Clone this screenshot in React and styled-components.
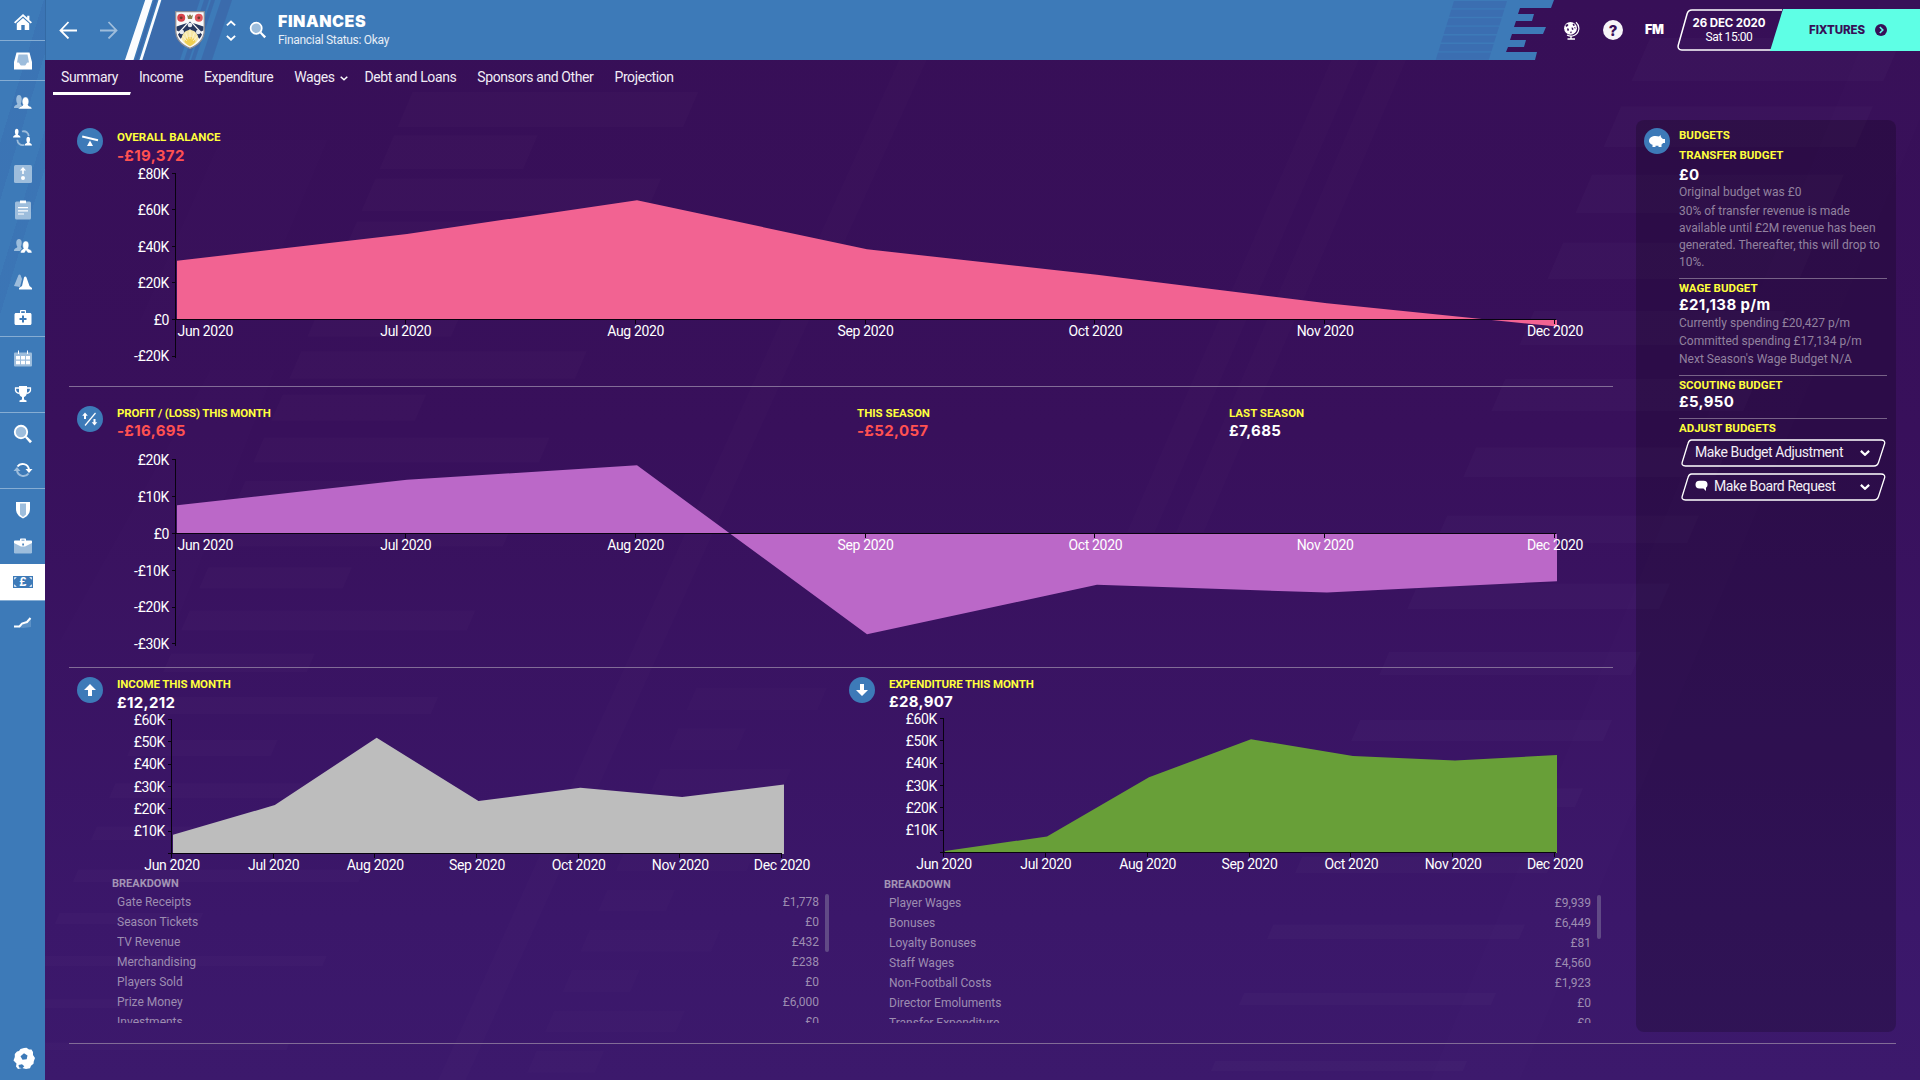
import React from "react";
import styled, { createGlobalStyle, css } from "styled-components";

const SANS = `Roboto, "Liberation Sans", sans-serif`;
const WIDE = `Inter, "Liberation Sans", sans-serif`;
const BLUE = "#3d7ab8";

const GlobalStyle = createGlobalStyle`
  * { box-sizing: border-box; }
  html, body { margin: 0; padding: 0; background: #370f57; }
  body { font-family: ${SANS}; color: #fff; overflow: hidden; }
`;

/* ---------- layout ---------- */
const Shell = styled.div`
  position: relative;
  display: grid;
  grid-template-columns: 45px 1fr;
  width: 1920px;
  height: 1080px;
  background: linear-gradient(180deg, #370f57 0%, #38105b 40%, #3b176a 85%, #3c196c 100%);
  overflow: hidden;
`;
const Backdrop = styled.svg`
  position: absolute;
  inset: 0;
  width: 1920px;
  height: 1080px;
`;
const Sidebar = styled.nav`
  position: relative;
  display: flex;
  flex-direction: column;
  height: 1080px;
  background: ${BLUE};
  background-image: linear-gradient(107deg, transparent 0 30%, rgba(50, 90, 165, 0.18) 30% 42%, transparent 42% 58%, rgba(50, 90, 165, 0.16) 58% 66%, transparent 66%);
  background-size: 45px 330px;
  background-repeat: no-repeat;
`;
const NavGroup = styled.div`
  display: flex;
  flex-direction: column;
  padding-top: ${(p) => (p.$lone ? 0 : 3)}px;
  border-bottom: ${(p) => (p.$open ? "none" : "1px solid #86add3")};
`;
const NavItem = styled.div`
  display: flex;
  align-items: center;
  justify-content: center;
  height: ${(p) => p.$h || 36}px;
  padding: ${(p) => p.$pt || 0}px 0 0 1px;
  background: ${(p) => (p.$active ? "#fff" : "transparent")};
`;
const NavFoot = styled.div`
  display: flex;
  justify-content: center;
  margin-top: auto;
  padding: 0 0 11px 2px;
`;
const Page = styled.div`
  position: relative;
  display: flex;
  flex-direction: column;
  min-width: 0;
`;

/* ---------- header ---------- */
const Header = styled.header`
  position: relative;
  display: flex;
  align-items: center;
  height: 60px;
`;
const HeaderArt = styled.svg`
  position: absolute;
  left: 0;
  top: 0;
  width: 1540px;
  height: 60px;
`;
const HeaderLeft = styled.div`
  position: relative;
  display: flex;
  align-items: center;
  height: 60px;
  padding-left: 14px;
`;
const HeaderRight = styled.div`
  position: relative;
  display: flex;
  align-items: center;
  height: 60px;
  margin-left: auto;
`;
const Slot = styled.div`
  display: flex;
  align-items: center;
  flex: none;
  margin-left: ${(p) => p.$ml || 0}px;
  opacity: ${(p) => p.$o || 1};
`;
const Stepper = styled.div`
  display: flex;
  flex-direction: column;
  gap: 8px;
  padding-top: 1px;
`;
const TitleBlock = styled.div`
  display: flex;
  flex-direction: column;
  gap: 1px;
  margin-left: 11px;
`;
const Title = styled.h1`
  margin: 0;
  font: 900 16px/19px ${WIDE};
  letter-spacing: 0.55px;
`;
const Subtitle = styled.div`
  font: 400 12px/16px ${SANS};
  letter-spacing: -0.3px;
  color: #e6edf6;
`;
const Brand = styled.div`
  margin-left: 22px;
  width: 22px;
  font: 900 12.5px/20px ${WIDE};
  letter-spacing: -0.4px;
`;
const DateBox = styled.div`
  position: relative;
  width: 106px;
  height: 42px;
  margin-left: 10px;
  padding-right: 2px;
  display: flex;
  flex-direction: column;
  align-items: center;
  justify-content: center;
`;
const BoxArt = styled.svg`
  position: absolute;
  left: 0;
  top: 0;
`;
const DateMain = styled.div`
  position: relative;
  font: 700 11.5px/14px ${WIDE};
  letter-spacing: -0.1px;
  white-space: nowrap;
`;
const DateSub = styled.div`
  position: relative;
  font: 400 12px/14px ${SANS};
  letter-spacing: -0.4px;
`;
const Continue = styled.button`
  display: flex;
  align-items: center;
  gap: 10px;
  width: 150px;
  height: 42px;
  margin-left: -13px;
  padding: 0 0 0 39px;
  border: 0;
  background: #5effe5;
  color: #370f57;
  clip-path: polygon(13px 0, 100% 0, 100% 100%, 0 100%);
  font: 800 11.5px/14px ${WIDE};
  letter-spacing: -0.1px;
`;

/* ---------- tabs ---------- */
const Tabs = styled.div`
  display: flex;
  height: 36px;
  padding-left: 8px;
`;
const Tab = styled.div`
  display: flex;
  align-items: center;
  gap: 5px;
  height: 35px;
  padding: 0 ${(p) => (p.$menu ? 9 : 13)}px 1px 8px;
  font: 400 14px/18px ${SANS};
  letter-spacing: -0.4px;
  white-space: nowrap;
  color: #f1ecf6;
  ${(p) =>
    p.$active &&
    css`
      background: linear-gradient(#fff, #fff) bottom / 100% 3px no-repeat;
      clip-path: polygon(0 0, 100% 0, 100% 32px, calc(100% - 1px) 100%, 0 100%);
    `}
`;

/* ---------- body ---------- */
const Body = styled.div`
  display: flex;
  height: 947px;
  padding-left: 24px;
  margin-right: 24px;
`;
const Charts = styled.div`
  display: flex;
  flex-direction: column;
  width: 1544px;
`;
const Section = styled.section`
  display: flex;
  flex-direction: column;
  height: ${(p) => p.$h}px;
  padding-top: ${(p) => p.$pt}px;
  border-bottom: ${(p) => (p.$last ? "none" : "1px solid #826c97")};
`;
const Halves = styled.div`
  display: grid;
  grid-template-columns: 772px 772px;
  height: 375px;
`;
const FootRule = styled.div`
  height: 1px;
  margin: 0 24px;
  background: #826c97;
`;
const SectionHead = styled.div`
  display: flex;
  align-items: flex-start;
  padding-left: 8px;
`;
const Badge = styled.div`
  display: flex;
  align-items: center;
  justify-content: center;
  flex: none;
  width: 26px;
  height: 26px;
  margin-top: ${(p) => p.$mt || 0}px;
  margin-right: ${(p) => p.$mr || 14}px;
  border-radius: 50%;
  background: ${BLUE};
`;
const Stat = styled.div`
  display: flex;
  flex-direction: column;
  gap: ${(p) => p.$gap || 0}px;
  width: ${(p) => (p.$w ? p.$w + "px" : "auto")};
`;
const Caption = styled.div`
  font: 700 11.500px/${(p) => p.$lh || 18}px ${SANS};
  letter-spacing: ${(p) => p.$ls || 0}px;
  color: #ffff3c;
  white-space: nowrap;
`;
const Amount = styled.div`
  font: 700 15px/${(p) => p.$lh || 18}px ${WIDE};
  letter-spacing: 0.35px;
  color: ${(p) => (p.$neg ? "#ff5151" : "#fff")};
  margin-top: ${(p) => p.$mt || 0}px;
  white-space: nowrap;
`;
const ChartSvg = styled.svg`
  display: block;
  flex: none;
  overflow: visible;
  font: 400 14px ${SANS};
  letter-spacing: -0.33px;
  fill: #fff;
`;
const BreakTitle = styled.div`
  padding-left: 43px;
  font: 700 11px/17px ${SANS};
  color: #a394b5;
`;
const BreakWrap = styled.div`
  display: flex;
  gap: 6px;
  height: ${(p) => p.$h}px;
  padding: 0 12px 0 48px;
`;
const BreakList = styled.div`
  flex: 1;
  overflow: hidden;
`;
const BreakRow = styled.div`
  display: flex;
  justify-content: space-between;
  font: 400 12px/20px ${SANS};
  color: #9d8db1;
`;
const Scroll = styled.div`
  width: 4px;
  height: ${(p) => p.$h}px;
  margin-top: 2px;
  border-radius: 2px;
  background: #614a86;
`;

/* ---------- budgets ---------- */
const Panel = styled.aside`
  display: flex;
  align-items: flex-start;
  width: 260px;
  height: 912px;
  margin: 24px 0 0 23px;
  padding: 8px 9px 0 8px;
  border-radius: 8px;
  background: rgba(0, 0, 0, 0.2);
`;
const PanelBody = styled.div`
  flex: 1;
  display: flex;
  flex-direction: column;
  margin-top: -2px;
`;
const Note = styled.div`
  font: 400 12px/${(p) => p.$lh || 18}px ${SANS};
  color: #92829f;
  margin-top: ${(p) => p.$mt || 0}px;
`;
const Rule = styled.div`
  height: 1px;
  margin: ${(p) => p.$mt || 7}px 0 1px;
  background: #776287;
`;
const Picker = styled.button`
  position: relative;
  display: flex;
  align-items: center;
  gap: 6px;
  width: 205px;
  height: 28px;
  margin: ${(p) => p.$mt || 0}px 0 0 2px;
  padding: 0 16px 3px 14px;
  border: 0;
  background: none;
  color: #f3eff6;
  font: 400 14px/18px ${SANS};
  letter-spacing: -0.42px;
`;
const PickerText = styled.span`
  position: relative;
  flex: 1;
  text-align: left;
  white-space: nowrap;
`;
const Caret = styled.span`
  display: flex;
  padding-top: ${(p) => p.$drop || 3}px;
`;

/* ---------- icons ---------- */
const W = "#fff";
const L = "#9dbddc";
const Ico = ({ s = 20, children }) => (
  <svg width={s} height={s} viewBox="0 0 20 20" fill={W}>
    {children}
  </svg>
);
const person = "M0 14.5c0-2.4 3.2-2.6 3.6-3.8C2.2 9 1.8 3 5 3s2.800 6 1.400 7.700c.4 1.200 3.600 1.400 3.600 3.800z";
const HomeIcon = () => (
  <Ico>
    <path d="M10 2 1 10.300l1.300 1.200L10 4.500l7.700 7 1.300-1.200-2.600-2.400V3.800h-2.200v2z" />
    <path d="M10 6 3.800 11.600V18h4.500v-5h3.400v5h4.500v-6.400z" />
  </Ico>
);
const InboxIcon = () => (
  <Ico>
    <path fill={L} d="M5 3h10l2 9-4 4H7l-4-3z" />
    <path d="M3.500 1.500h13L19 11v7.500H1V11zM5.500 3.500 4 11.500h1.500c1 0 1.500 3 2.500 3h4c1 0 1.500-3 2.500-3H16l-1.500-8z" fillRule="evenodd" />
  </Ico>
);
const PeopleIcon = () => (
  <Ico>
    <path fill={L} d="M1 16c0-3 3-2.800 3.400-4.300C2.800 9.500 2.600 3 6 3s3.200 6.500 1.800 8.700c.2 1 1.200 1.300 1.200 1.300L8 16z" />
    <path d="M5.500 17c0-2.800 4-2.600 4.600-4C8.500 11 8.700 5 12.500 5s4 6 2.400 8c.6 1.400 4.100 1.200 4.100 4z" stroke={BLUE} strokeWidth=".5" />
  </Ico>
);
const SwapPeopleIcon = () => (
  <Ico>
    <path fill="none" stroke={L} strokeWidth="1.800" d="M9 3.500c4-1 6.500 1.500 6.700 4.500M11 16.800c-3.500 1-6.500-1.500-6.700-5" />
    <g transform="translate(0 -1.500) scale(.75)"><path d={person} /></g>
    <g transform="translate(11.500 6.500) scale(.75)"><path d={person} /></g>
  </Ico>
);
const TacticIcon = () => (
  <Ico>
    <rect x="1" y="1" width="18" height="18" rx="1.500" fill={L} />
    <circle cx="10" cy="14" r="2" />
    <path d="M10 3 7 6.500h2.200V10h1.600V6.500H13z" />
  </Ico>
);
const ClipIcon = () => (
  <Ico>
    <rect x="2" y="1.500" width="16" height="18" rx="1.500" fill={L} />
    <path d="M7 .5h6v2.800H7zM5 7h10v1.200H5zM5 10.200h10v1.200H5zM5 13.400h6v1.200H5z" />
  </Ico>
);
const StaffIcon = () => (
  <Ico>
    <path fill={L} d="M1 15c0-3 3-2.800 3.400-4.300C2.800 8.500 2.600 3 6 3s3.200 5.500 1.800 7.700c.2 1 1.200 1.300 1.200 1.300L7 15z" />
    <path d="M7.500 17c0-3.500 2.500-3.600 3-4.500C9 10 9.400 5 12.800 5s3.800 5 2.200 7.500c1 .9 4 1 4 4.500h-4l-2-2.500-1.500 2.500z" stroke={BLUE} strokeWidth=".5" />
  </Ico>
);
const ConesIcon = () => (
  <Ico>
    <path fill={L} d="M1 14 5.500 3c.3-.8 1.700-.8 2 0L9 7 7 15z" />
    <path d="m6 16 3-2L11 5.500c.5-1.200 2-1.200 2.500 0L16.500 14l2.500 2v1.500H6z" />
  </Ico>
);
const MedIcon = () => (
  <Ico>
    <path d="M7 5V3.200C7 2.500 7.400 2 8 2h4c.6 0 1 .5 1 1.200V5h4c.8 0 1.500.7 1.500 1.500v9c0 .8-.7 1.500-1.500 1.500H3c-.8 0-1.500-.7-1.500-1.500v-9C1.500 5.700 2.200 5 3 5zm1.200 0h3.600V3.300H8.200zM9 7.500V10H6.500v2H9v2.500h2V12h2.500v-2H11V7.500z" fillRule="evenodd" />
  </Ico>
);
const CalIcon = () => (
  <Ico>
    <rect x="1" y="4.500" width="18" height="14" rx="1" fill={L} />
    <path d="M5 2.500h1V6H5zM14 2.500h1V6h-1zM3 8h4v3.500H3zM8 8h4v3.500H8zM13 8h4v3.500h-4zM3 12.800h4v3.500H3zM8 12.800h4v3.500H8zM13 12.800h4v3.500h-4z" />
  </Ico>
);
const CupIcon = () => (
  <Ico>
    <path d="M6 2h8v6c0 3-1.500 4.500-3 5v2.500l2.500 1V18h-7v-1.500l2.500-1V13c-1.500-.5-3-2-3-5z" />
    <path fill="none" stroke={W} strokeWidth="1.300" d="M6 4H2.500C2 7.500 4 9.500 6.500 9.200M14 4h3.500c.5 3.500-1.500 5.500-4 5.200" />
  </Ico>
);
const SearchIcon = ({ s }) => (
  <Ico s={s}>
    <circle cx="8" cy="8" r="6.200" fill={L} stroke={W} strokeWidth="1.900" />
    <path d="m12 13.500 1.500-1.500 5.500 5.200-2 2z" />
  </Ico>
);
const CycleIcon = () => (
  <Ico>
    <path fill="none" stroke={W} strokeWidth="2" d="M4.500 6.500C7.500 2.200 15 3.500 16 9.500" />
    <path d="M12.500 9h7L16 13z" />
    <path fill="none" stroke={L} strokeWidth="2" d="M15.500 13.500C12.500 17.800 5 16.500 4 10.500" />
    <path fill={L} d="M.5 11h7L4 7z" />
  </Ico>
);
const ShieldIcon = () => (
  <Ico>
    <path d="M3 2h14v7c0 5-3.500 8-7 9.500C6.500 17 3 14 3 9z" />
    <path fill={L} d="M7 3.500h6v11L10 17l-3-2.500z" />
  </Ico>
);
const CaseIcon = () => (
  <Ico>
    <rect x="1" y="5" width="18" height="12.500" rx="1.200" fill={L} />
    <path d="M7 4.500V3.500c0-.6.400-1 1-1h4c.6 0 1 .4 1 1v1h5c.6 0 1 .5 1 1V7l-7 3.500h-4L1 7V5.500c0-.5.400-1 1-1zm1.500 0h3V3.800h-3z" fillRule="evenodd" />
    <rect x="9.300" y="7.500" width="1.600" height="2" fill={BLUE} />
  </Ico>
);
const MoneyText = styled.text`
  font: 700 11.500px ${WIDE};
`;
const MoneyIcon = () => (
  <svg width="20" height="12" viewBox="0 0 20 12">
    <rect width="20" height="12" fill={BLUE} />
    <path fill={W} d="M1.200 1.200h2.600L1.200 3.800zM18.800 1.200h-2.600l2.600 2.600zM1.200 10.800h2.600L1.200 8.200zM18.800 10.800h-2.600l2.600-2.600z" />
    <MoneyText x="10" y="10.200" textAnchor="middle" fill={W}>£</MoneyText>
  </svg>
);
const TrendIcon = () => (
  <Ico>
    <path fill="#5c91c6" d="M1 14.500h6L10 12l4-1 4-4v8l-8 1z" />
    <path fill="none" stroke={W} strokeWidth="2" d="M1 14.500h5.500L9 11.500l5-1.500L17.500 6" />
  </Ico>
);
const BallIcon = () => (
  <svg width="22" height="22" viewBox="0 0 22 22">
    <path fill={W} d="M7.500 2 11 1l2.500-.2L16 2.500h2.500L20 5v3l2 3-1.200 3.200-.3 2.500-2.500 2-1 2.500-4 .8L9 21l-4 1-2-2.500.5-3L.5 13.500 1.800 10l0-3L4 4.500 6 4z" />
    <path fill={BLUE} d="m11 6.300 3.500 2.200-.8 3.800-4.200.5-2-3.600zM5.500 18l3.500-.8 2.300 2-2 2-3.300-.7z" />
  </svg>
);
const Chevron = ({ w = 8, up, sw = 1.800 }) => (
  <svg width={w} height={w * 0.625} viewBox="0 0 8 5" fill="none" stroke={W} strokeWidth={sw}>
    <path d={up ? "M.7 4.300 4 1.200l3.300 3.100" : "M.7.7 4 3.800 7.300.7"} />
  </svg>
);
const Arrow = ({ flip }) => (
  <svg width="18" height="18" viewBox="0 0 18 18" fill="none" stroke={W} strokeWidth="1.800">
    <path d={flip ? "M0 9.500h16.500M8.500 1l8 8.500-8 8" : "M18 9.500H1.500M9.500 1l-8 8.500 8 8"} />
  </svg>
);
const Crest = () => (
  <svg width="30" height="38" viewBox="0 0 30 38">
    <path d="M.7.7h28.600V19c0 9-6 15-14.300 18.300C6.700 34 .7 28 .7 19z" fill="#fafafa" stroke="#8d8d94" strokeWidth="1.300" />
    <path d="M15 10.500 27 23.500c-.6 1.600-1.500 3-2.600 4.200L15 18l-9.400 9.700C4.500 26.500 3.600 25.100 3 23.500z" fill="#27385f" />
    <path d="M1.500 15.500 12 12l-8 8.500-2.300-1zM28.500 15.500 18 12l8 8.500 2.300-1z" fill="#27385f" />
    <path d="M15 19c5 0 8 4 8.500 9-2 3.500-5 5.800-8.500 7.500-3.500-1.700-6.500-4-8.500-7.500C7 23 10 19 15 19z" fill="#f6e7a6" />
    <path d="M15 26c3 0 5 2 5.500 5-1.600 1.800-3.500 3.200-5.500 4.300-2-1.100-3.900-2.500-5.500-4.300.5-3 2.500-5 5.500-5z" fill="#f0cf52" />
    <path d="M15 20v8M10.500 21.500l2.500 7M19.500 21.500l-2.500 7M7.800 25l4 5M22.200 25l-4 5" stroke="#fffbe6" strokeWidth=".7" />
    <circle cx="6.200" cy="6.800" r="4" fill="#d8434b" />
    <circle cx="23.800" cy="6.800" r="4" fill="#e0565c" />
    <circle cx="6.200" cy="6.800" r="1.400" fill="#6d3a2c" />
    <circle cx="23.800" cy="6.800" r="1.400" fill="#6d3a2c" />
    <path d="M12 3.500 13.500 5 15 3.300 16.500 5 18 3.500 17 8h-4z" fill="#8d7f4d" />
    <circle cx="15" cy="14" r="2.300" fill="#e6e9ef" />
    <circle cx="6.800" cy="21" r="2.300" fill="#e6e9ef" />
    <circle cx="23.200" cy="21" r="2.300" fill="#e6e9ef" />
  </svg>
);
const GlobeIcon = () => (
  <svg width="17" height="19" viewBox="0 0 17 19">
    <circle cx="7.500" cy="7.300" r="6.400" fill={W} />
    <path d="M13 1.200c4.500 4 3.600 11-2 13.300-2.500 1-5 .6-7-.5" fill="none" stroke={W} strokeWidth="1.200" />
    <path d="M8 15v2.500M4.500 18h7.500" stroke={W} strokeWidth="1.400" />
    <path d="M2.500 4 4.500 3l1 1-1 1.200L3 6zM9.500 3.200l1.500-.8.8 2-1.300.6zM4.500 7l1.500 1-.5 2-1.500-.8zM8.500 6.500l1.500.3.500 1.700-1.500.5zM11 6.500l1.300-.4v2zM7.500 10.500l1.500.3-.8 1.500-1-.3z" fill="#370f57" />
  </svg>
);
const HelpText = styled.text`
  font: 800 15px ${WIDE};
`;
const HelpIcon = () => (
  <svg width="20" height="20" viewBox="0 0 20 20">
    <circle cx="10" cy="10" r="10" fill="#f6f4f8" />
    <HelpText x="10" y="15.500" textAnchor="middle" fill="#370f57">?</HelpText>
  </svg>
);
const GoIcon = () => (
  <svg width="12" height="12" viewBox="0 0 12 12">
    <circle cx="6" cy="6" r="6" fill="#370f57" />
    <path d="M4.800 3 7.800 6l-3 3" fill="none" stroke="#5effe5" strokeWidth="1.600" />
  </svg>
);
const BalanceIcon = () => (
  <svg width="18" height="16" viewBox="0 0 18 16">
    <path d="M1.200 3.500 17 7.200" stroke={W} strokeWidth="2" />
    <path d="M9 7.500 12 13H6z" fill={W} />
  </svg>
);
const RatioIcon = () => (
  <svg width="18" height="18" viewBox="0 0 18 18">
    <path d="M4 15.500 14.500 3" stroke={W} strokeWidth="1.200" />
    <path fill={W} d="M4 2.500 1.200 5.700H3V9h2V5.700h1.800zM13.500 15.500l2.800-3.200h-1.800V9h-2v3.300h-1.800z" />
  </svg>
);
const BigArrow = ({ down }) => (
  <svg width="12" height="14" viewBox="0 0 12 14">
    <path fill={W} d={down ? "M6 13 0 7h4V1h4v6h4z" : "M6 1 0 7h4v6h4V7h4z"} />
  </svg>
);
const PiggyIcon = () => (
  <svg width="18" height="14" viewBox="0 0 18 14">
    <path fill={W} d="M1 7c0-3.500 3-5 6.500-5 1.500 0 2.500.2 3.500.6L12.500 1l.5 2.300c1 .6 1.500 1.200 1.800 1.700H17v4h-2c-.4.700-1 1.200-1.500 1.600V13H10.500v-1.300H7.500V13H4.500v-2.200C2.500 10 1 9 1 7z" />
  </svg>
);
const BubbleIcon = () => (
  <svg width="13" height="11" viewBox="0 0 13 11">
    <path fill={W} d="M4.500.8h4C11.500.8 12.500 2.500 12.500 4.500c0 1.500-.5 2.500-1.500 3.200V11L8.500 8.500h-4C1.800 8.500.5 7 .5 4.700S1.800.8 4.500.8z" />
  </svg>
);

/* ---------- decorative artwork ---------- */
const slab = (x, y, w, h, k = 0.43) => `M${x} ${y}h${w}l${-k * h} ${h}h${-w}z`;
const BackdropArt = () => {
  const left = Array.from({ length: 23 }, (_, i) => {
    const y = 92 + 43.2 * i;
    return slab(452 - 0.43 * y, y, i % 2 ? 144 : 286, 35 - 1.25 * i);
  });
  const right = Array.from({ length: 16 }, (_, i) => {
    const y = 38 + 68.2 * i;
    return slab(1650 - 0.425 * (y - 38), y, 252, 43 - 2.2 * i);
  });
  const mid = Array.from({ length: 10 }, (_, i) => {
    const y = 688 + 40.3 * i;
    return slab(696 - 0.44 * (y - 688), y, i % 2 ? 68 : 131, 22);
  });
  return (
    <Backdrop fill="#fff" fillOpacity="0.012">
      <path d={left.join("")} fillOpacity="0.016" />
      <path d={right.join("")} fillOpacity="0.020" />
      <path d={mid.join("")} />
      <path d="M926 0h28L466 1080h-28z" />
      <path d="M1357 0h28L1155 532h-28zM1404 0h28L1204 532h-28z" />
      <path d="M220 140h108L252 320H140zM210 370h65L170 640H60zM1880 0h40v120L1520 1080h-90z" fillOpacity="0.008" />
    </Backdrop>
  );
};
const HeaderBackdrop = () => (
  <HeaderArt viewBox="45 0 1540 60">
    <path fill={BLUE} d="M45 0H1554L1551 8H1520L1518 14H1534L1532 21H1516L1514 27H1546L1543 34H1512L1510 40H1526L1524 47H1508L1506 52H1537L1535 60H45z" />
    {[0, 8.6, 17.2, 25.8, 34.4, 43, 51.6].map((y) => (
      <path key={y} fill="#3b6eb1" d={slab(1454 - 0.31 * y, y + 1, 53, 7.2, 0.31)} />
    ))}
    <path fill="#3b69ab" d="M162 0h38l-20 60h-38zM204 0h5l-20 60h-5zM211 0h4l-20 60h-4zM221 0h11l-20 60h-11zM154 0h3l-19 60h-3z" fillOpacity="0.900" />
    <path fill="#fbfcfe" d="M145.200 0h7.300l-19 60h-8.500zM158.500 0h2.800l-19 60h-2.800z" />
    <path fill="#2d5f97" fillOpacity="0.600" d="M45 0h1v60h-1z" />
  </HeaderArt>
);

/* ---------- charts ---------- */
const MONTHS = ["Jun 2020", "Jul 2020", "Aug 2020", "Sep 2020", "Oct 2020", "Nov 2020", "Dec 2020"];
const Chart = ({ width, height, axisX, zero, perK, step, color, values, ticks, endLabelInset, topless }) => {
  const base = zero + 0.5;
  const x0 = axisX + 1.5;
  const pts = values.map((v, i) => `${x0 + i * step},${base - v * perK}`).join(" ");
  const tickStep = (step * 6 - 1) / 6;
  const top = zero - ticks[0] * perK;
  const bottom = zero - Math.min(0, ticks[ticks.length - 1]) * perK;
  return (
    <ChartSvg width={width} height={height}>
      <polygon points={`${x0},${base} ${pts} ${x0 + 6 * step},${base}`} fill={color} />
      <g fill="none" stroke="#08020f" strokeWidth="1" shapeRendering="crispEdges">
        <path d={`M${axisX} ${top}V${bottom + (topless ? 0 : 2)}M${axisX} ${zero}H${axisX + tickStep * 6 + 1}`} />
        {ticks.map((t) => <path key={t} d={`M${axisX - 3.5} ${zero - t * perK}H${axisX}`} />)}
        {topless && <path d={`M${axisX - 3.5} ${zero}H${axisX}`} />}
        {MONTHS.map((m, i) => <path key={m} d={`M${Math.floor(axisX + i * tickStep) + 0.5} ${zero}v4.500`} />)}
      </g>
      {ticks.map((t) => (
        <text key={t} x={axisX - 6.5} y={zero - t * perK + 5.3} textAnchor="end">
          {t < 0 ? `-£${-t}K` : t === 0 ? "£0" : `£${t}K`}
        </text>
      ))}
      {MONTHS.map((m, i) => (
        <text key={m} x={endLabelInset && i === 0 ? axisX + 2 : axisX + 0.5 + i * tickStep} y={zero + 16.5} textAnchor={endLabelInset && i === 0 ? "start" : "middle"}>
          {m}
        </text>
      ))}
    </ChartSvg>
  );
};

const Breakdown = ({ rows, height, thumb }) => (
  <>
    <BreakTitle>BREAKDOWN</BreakTitle>
    <BreakWrap $h={height}>
      <BreakList>
        {rows.map(([k, v]) => (
          <BreakRow key={k}><span>{k}</span><span>{v}</span></BreakRow>
        ))}
      </BreakList>
      <Scroll $h={thumb} />
    </BreakWrap>
  </>
);

const PickerFrame = () => (
  <BoxArt width="205" height="28" viewBox="0 0 205 28">
    <path d="M10.500 1H200c3 0 4.300 1.500 3.500 4l-6 18.500c-.8 2.500-2 3.500-4.500 3.500H4.500C1.500 27 .5 25.500 1.300 23L7 4.500C7.700 2 8.500 1 10.500 1z" fill="none" stroke="#fff" strokeWidth="1.300" />
  </BoxArt>
);

const INCOME = [["Gate Receipts", "£1,778"], ["Season Tickets", "£0"], ["TV Revenue", "£432"], ["Merchandising", "£238"], ["Players Sold", "£0"], ["Prize Money", "£6,000"], ["Investments", "£0"]];
const SPEND = [["Player Wages", "£9,939"], ["Bonuses", "£6,449"], ["Loyalty Bonuses", "£81"], ["Staff Wages", "£4,560"], ["Non-Football Costs", "£1,923"], ["Director Emoluments", "£0"], ["Transfer Expenditure", "£0"]];

export default function App() {
  return (
    <Shell>
      <GlobalStyle />
      <BackdropArt />
      <Sidebar>
        <NavGroup $lone><NavItem $h={40} $pt={4}><HomeIcon /></NavItem></NavGroup>
        <NavGroup $lone><NavItem $h={39}><InboxIcon /></NavItem></NavGroup>
        <NavGroup>
          {[PeopleIcon, SwapPeopleIcon, TacticIcon, ClipIcon, StaffIcon, ConesIcon, MedIcon].map((I, i) => <NavItem key={i}><I /></NavItem>)}
        </NavGroup>
        <NavGroup>{[CalIcon, CupIcon].map((I, i) => <NavItem key={i}><I /></NavItem>)}</NavGroup>
        <NavGroup>{[SearchIcon, CycleIcon].map((I, i) => <NavItem key={i}><I /></NavItem>)}</NavGroup>
        <NavGroup>
          <NavItem><ShieldIcon /></NavItem>
          <NavItem><CaseIcon /></NavItem>
          <NavItem $active><MoneyIcon /></NavItem>
        </NavGroup>
        <NavGroup $open><NavItem><TrendIcon /></NavItem></NavGroup>
        <NavFoot><BallIcon /></NavFoot>
      </Sidebar>
      <Page>
        <Header>
          <HeaderBackdrop />
          <HeaderLeft>
            <Slot><Arrow /></Slot>
            <Slot $ml={23} $o={0.5}><Arrow flip /></Slot>
            <Slot $ml={57}><Crest /></Slot>
            <Slot $ml={21}>
              <Stepper><Chevron w={10} up sw={1.500} /><Chevron w={10} sw={1.500} /></Stepper>
            </Slot>
            <Slot $ml={13}><SearchIcon s={18} /></Slot>
            <TitleBlock>
              <Title>FINANCES</Title>
              <Subtitle>Financial Status: Okay</Subtitle>
            </TitleBlock>
          </HeaderLeft>
          <HeaderRight>
            <Slot><GlobeIcon /></Slot>
            <Slot $ml={23}><HelpIcon /></Slot>
            <Brand>FM</Brand>
            <DateBox>
              <BoxArt width="106" height="42" viewBox="0 0 106 42">
                <path d="M105 1H15c-2.500 0-4 1-4.800 3.500L1.300 36c-.8 3 .7 5 3.500 5H94" fill="none" stroke="#fff" strokeWidth="1.500" />
              </BoxArt>
              <DateMain>26 DEC 2020</DateMain>
              <DateSub>Sat 15:00</DateSub>
            </DateBox>
            <Continue>FIXTURES<GoIcon /></Continue>
          </HeaderRight>
        </Header>
        <Tabs>
          <Tab $active>Summary</Tab>
          <Tab>Income</Tab>
          <Tab>Expenditure</Tab>
          <Tab $menu>Wages<Caret $drop={2}><Chevron w={8} sw={1.500} /></Caret></Tab>
          <Tab>Debt and Loans</Tab>
          <Tab>Sponsors and Other</Tab>
          <Tab>Projection</Tab>
        </Tabs>
        <Body>
          <Charts>
            <Section $h={291} $pt={32}>
              <SectionHead>
                <Badge><BalanceIcon /></Badge>
                <Stat $gap={1}>
                  <Caption>OVERALL BALANCE</Caption>
                  <Amount $neg>-£19,372</Amount>
                </Stat>
              </SectionHead>
              <Chart width={1544} height={200} axisX={106.5} zero={154.5} perK={1.8275} step={230} color="#f26392"
                values={[32.4, 47.1, 65.5, 38.7, 24.7, 9.1, -3.6]} ticks={[80, 60, 40, 20, 0, -20]} endLabelInset />
            </Section>
            <Section $h={281} $pt={17}>
              <SectionHead>
                <Badge $mt={2}><RatioIcon /></Badge>
                <Stat $w={740}>
                  <Caption $ls={-0.14}>PROFIT / (LOSS) THIS MONTH</Caption>
                  <Amount $neg>-£16,695</Amount>
                </Stat>
                <Stat $w={372}>
                  <Caption>THIS SEASON</Caption>
                  <Amount $neg>-£52,057</Amount>
                </Stat>
                <Stat>
                  <Caption>LAST SEASON</Caption>
                  <Amount>£7,685</Amount>
                </Stat>
              </SectionHead>
              <Chart width={1544} height={220} axisX={106.5} zero={93.5} perK={3.683} step={230} color="#bb68c8"
                values={[7.8, 14.7, 18.65, -27.2, -13.8, -15.9, -12.8]} ticks={[20, 10, 0, -10, -20, -30]} endLabelInset />
            </Section>
            <Halves>
              <Section $h={375} $pt={7} $last>
                <SectionHead>
                  <Badge $mt={2}><BigArrow /></Badge>
                  <Stat>
                    <Caption $ls={-0.12}>INCOME THIS MONTH</Caption>
                    <Amount $mt={1} $lh={17}>£12,212</Amount>
                  </Stat>
                </SectionHead>
                <Chart width={772} height={164} axisX={102.5} zero={142.5} perK={2.235} step={101.83} color="#bdbdbd"
                  values={[8.6, 21.9, 52, 23.7, 29.6, 25.5, 31.1]} ticks={[60, 50, 40, 30, 20, 10]} topless />
                <Breakdown rows={INCOME} height={131} thumb={58} />
              </Section>
              <Section $h={375} $pt={7} $last>
                <SectionHead>
                  <Badge $mt={2}><BigArrow down /></Badge>
                  <Stat>
                    <Caption $ls={-0.12}>EXPENDITURE THIS MONTH</Caption>
                    <Amount $lh={17}>£28,907</Amount>
                  </Stat>
                </SectionHead>
                <Chart width={772} height={166} axisX={102.5} zero={142.5} perK={2.235} step={102} color="#689f38"
                  values={[0.9, 7.4, 33.9, 50.9, 43.4, 41.4, 43.8]} ticks={[60, 50, 40, 30, 20, 10]} topless />
                <Breakdown rows={SPEND} height={130} thumb={44} />
              </Section>
            </Halves>
          </Charts>
          <Panel>
            <Badge $mr={9}><PiggyIcon /></Badge>
            <PanelBody>
              <Caption $lh={18}>BUDGETS</Caption>
              <Caption $lh={22}>TRANSFER BUDGET</Caption>
              <Amount $lh={17}>£0</Amount>
              <Note>Original budget was £0</Note>
              <Note $lh={17} $mt={2}>30% of transfer revenue is made available until £2M revenue has been generated. Thereafter, this will drop to 10%.</Note>
              <Rule />
              <Caption $lh={17}>WAGE BUDGET</Caption>
              <Amount $lh={16}>£21,138 p/m</Amount>
              <Note $mt={1}>Currently spending £20,427 p/m</Note>
              <Note>Committed spending £17,134 p/m</Note>
              <Note>Next Season's Wage Budget N/A</Note>
              <Rule />
              <Caption $lh={17}>SCOUTING BUDGET</Caption>
              <Amount $lh={16}>£5,950</Amount>
              <Rule $mt={8} />
              <Caption $lh={17}>ADJUST BUDGETS</Caption>
              <Picker $mt={2}><PickerFrame /><PickerText>Make Budget Adjustment</PickerText><Caret><Chevron w={10} /></Caret></Picker>
              <Picker $mt={6}><PickerFrame /><BubbleIcon /><PickerText>Make Board Request</PickerText><Caret><Chevron w={10} /></Caret></Picker>
            </PanelBody>
          </Panel>
        </Body>
        <FootRule />
      </Page>
    </Shell>
  );
}
